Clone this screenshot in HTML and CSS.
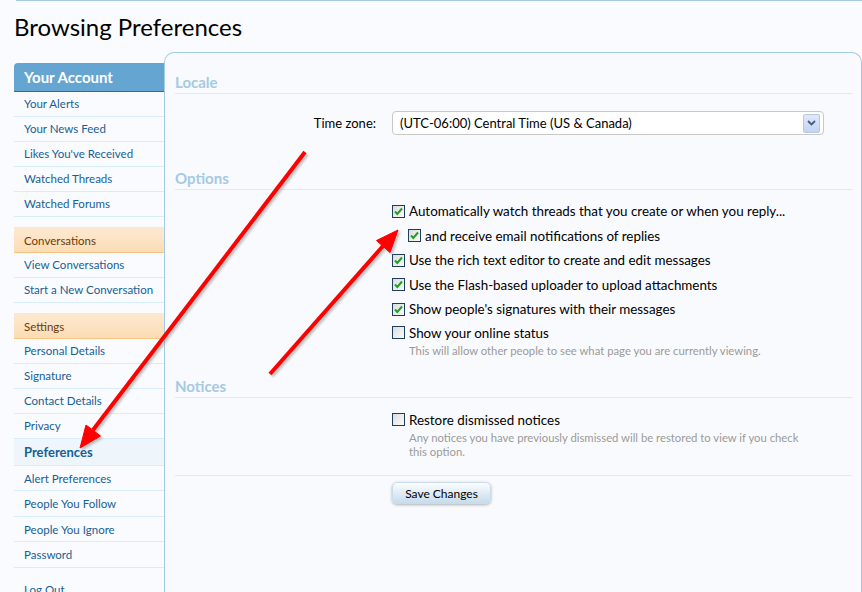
FILE: index.html
```html
<!DOCTYPE html>
<html lang="en">
<head>
    <meta charset="UTF-8">
    <title>Browsing Preferences</title>
    <link rel="stylesheet" href="styles.css">
</head>
<body>
    <div class="topline"></div>
    <h1 class="title">Browsing Preferences</h1>

    <div class="layout">
        <div class="sidebar">
            <div class="side-head">Your Account</div>
            <ul class="side-list">
                <li>Your Alerts</li>
                <li>Your News Feed</li>
                <li>Likes You've Received</li>
                <li>Watched Threads</li>
                <li>Watched Forums</li>
            </ul>
            <div class="side-group">Conversations</div>
            <ul class="side-list">
                <li>View Conversations</li>
                <li>Start a New Conversation</li>
            </ul>
            <div class="side-group">Settings</div>
            <ul class="side-list">
                <li>Personal Details</li>
                <li>Signature</li>
                <li>Contact Details</li>
                <li>Privacy</li>
                <li class="selected">Preferences</li>
                <li>Alert Preferences</li>
                <li>People You Follow</li>
                <li>People You Ignore</li>
                <li>Password</li>
            </ul>
            <ul class="side-list last">
                <li>Log Out</li>
            </ul>
        </div>

        <div class="panel">
            <h3 class="section-head first">Locale</h3>
            <div class="form-row">
                <label class="row-label">Time zone:</label>
                <div class="select">
                    <span>(UTC-06:00) Central Time (US &amp; Canada)</span>
                    <span class="select-btn">
                        <svg width="9" height="6" viewBox="0 0 9 6"><path d="M1 1 L4.5 4.5 L8 1" fill="none" stroke="#4a5d7a" stroke-width="1.8"/></svg>
                    </span>
                </div>
            </div>

            <h3 class="section-head options">Options</h3>
            <div class="options-list">
                <div class="opt"><span class="cb checked"></span>Automatically watch threads that you create or when you reply...</div>
                <div class="opt sub"><span class="cb checked"></span>and receive email notifications of replies</div>
                <div class="opt"><span class="cb checked"></span>Use the rich text editor to create and edit messages</div>
                <div class="opt"><span class="cb checked"></span>Use the Flash-based uploader to upload attachments</div>
                <div class="opt"><span class="cb checked"></span>Show people's signatures with their messages</div>
                <div class="opt short"><span class="cb"></span>Show your online status</div>
                <p class="hint">This will allow other people to see what page you are currently viewing.</p>
            </div>

            <h3 class="section-head notices">Notices</h3>
            <div class="options-list notices-list">
                <div class="opt short"><span class="cb"></span>Restore dismissed notices</div>
                <p class="hint">Any notices you have previously dismissed will be restored to view if you check this option.</p>
            </div>

            <div class="submit-row">
                <button class="save">Save Changes</button>
            </div>
        </div>
    </div>

    <svg class="arrows" width="862" height="592" viewBox="0 0 862 592">
        <defs>
            <filter id="blur"><feGaussianBlur stdDeviation="1"/></filter>
        </defs>
        <g fill="#9a9a9a" stroke="#9a9a9a" opacity="0.6" filter="url(#blur)" transform="translate(2,2)">
            <line x1="305" y1="152" x2="93" y2="430" stroke-width="4"/>
            <polygon points="80,448 100.5,436 86,425"/>
            <line x1="270" y1="374" x2="383" y2="246" stroke-width="4"/>
            <polygon points="398,230 390,252.5 376.5,240.5"/>
        </g>
        <g fill="#ff0000" stroke="#ff0000">
            <line x1="305" y1="152" x2="93" y2="430" stroke-width="4"/>
            <polygon points="80,448 100.5,436 86,425" stroke-width="1"/>
            <line x1="270" y1="374" x2="383" y2="246" stroke-width="4"/>
            <polygon points="398,230 390,252.5 376.5,240.5" stroke-width="1"/>
        </g>
    </svg>
</body>
</html>
```

FILE: styles.css
```css
body {
    margin: 0;
    background-color: #fafbfe;
    font-family: Lato, "Open Sans", sans-serif;
    color: #000;
    height: 592px;
    overflow: hidden;
    position: relative;
}
.topline {
    height: 1px;
    margin-left: 16px;
    background-color: #a5cae4;
}
.title {
    margin: 0;
    padding: 12px 0 0 14px;
    font-size: 24px;
    font-weight: normal;
    line-height: 28px;
    color: #000;
}
.layout {
    display: flex;
    margin-top: 11px;
    align-items: flex-start;
}
.sidebar {
    width: 150px;
    margin-left: 14px;
    margin-top: 11px;
    font-size: 11.5px;
}
.side-head {
    height: 28px;
    line-height: 28px;
    padding-left: 10px;
    background-color: #65a5d1;
    border-bottom: 1px solid #2f6c9f;
    border-radius: 4px 0 0 0;
    color: #fff;
    font-size: 15px;
    font-weight: bold;
}
.side-list {
    list-style: none;
    margin: 0;
    padding: 0;
}
.side-list li {
    height: 24px;
    line-height: 24px;
    padding-left: 10px;
    border-bottom: 1px solid #d7edfc;
    color: #176093;
}
.side-list li.selected {
    height: 26px;
    line-height: 27px;
    font-size: 13px;
    font-weight: bold;
    background-color: #eef5fb;
}
.side-list li.selected ~ li {
    height: 24.4px;
    line-height: 25px;
}
.side-group {
    margin-top: 10px;
    height: 24px;
    line-height: 25px;
    padding-left: 10px;
    border-top: 1px solid #fde7cc;
    border-bottom: 1px solid #f9c47f;
    background: linear-gradient(#fde9d0, #fcdcb5);
    color: #6b3b0a;
}
.side-list.last {
    margin-top: 10px;
}
.side-list.last li {
    border-bottom: none;
}
.panel {
    flex: 1;
    height: 560px;
    border: 1px solid #a5cae4;
    border-bottom: none;
    border-radius: 10px 10px 0 0;
    background-color: #f9fafd;
    padding: 0 9px 0 10px;
}
.section-head {
    margin: 0;
    height: 20px;
    line-height: 20px;
    padding-bottom: 1px;
    border-bottom: 1px solid #d7edfc;
    color: #a5cae4;
    font-size: 15px;
    font-weight: bold;
}
.section-head.first {
    margin-top: 19px;
}
.section-head.options {
    margin-top: 33px;
}
.section-head.notices {
    margin-top: 18px;
}
.form-row {
    display: flex;
    align-items: center;
    margin-top: 17px;
}
.row-label {
    width: 201px;
    text-align: right;
    padding-right: 16px;
    font-size: 13px;
}
.select {
    display: flex;
    align-items: center;
    justify-content: space-between;
    width: 420px;
    height: 22px;
    padding: 0 3px 0 7px;
    border: 1px solid #c8c8c8;
    border-radius: 4px;
    background-color: #fff;
    font-size: 13px;
}
.select-btn {
    display: flex;
    align-items: center;
    justify-content: center;
    width: 15px;
    height: 17px;
    border: 1px solid #b5c8e6;
    border-radius: 2px;
    background: linear-gradient(#e0e9fb, #c3d3f1);
}
.options-list {
    margin-left: 217px;
    margin-top: 9px;
    font-size: 13.4px;
}
.opt {
    display: flex;
    align-items: center;
    height: 24.5px;
}
.opt.sub {
    padding-left: 16px;
}
.opt.short {
    height: 22px;
}
.cb {
    display: inline-block;
    box-sizing: border-box;
    width: 13px;
    height: 13px;
    margin-right: 4px;
    border: 1px solid #1c3f5e;
    background: linear-gradient(135deg, #dcdcdc, #fbfbfb);
    flex-shrink: 0;
}
.cb.checked {
    background: url("data:image/svg+xml;utf8,<svg xmlns='http://www.w3.org/2000/svg' width='11' height='11'><path d='M2 5.5 L4.3 8 L9 2.5' fill='none' stroke='%2321a121' stroke-width='2'/></svg>") no-repeat center, linear-gradient(135deg, #dcdcdc, #fbfbfb);
}
.hint {
    margin: 0;
    padding-left: 17px;
    font-size: 11.3px;
    line-height: 14px;
    color: #9a9a9a;
    max-width: 400px;
}
.notices-list {
    margin-top: 11px;
}
.submit-row {
    margin-top: 16px;
    border-top: 1px solid #d7edfc;
    padding: 6px 0 0 217px;
}
.save {
    width: 99px;
    height: 22px;
    padding: 0;
    border: 1px solid #c9dcea;
    border-radius: 5px;
    background: linear-gradient(#fbfcfe, #c6dcec);
    box-shadow: 0 1px 3px rgba(0, 0, 0, 0.3);
    font-family: Lato, "Open Sans", sans-serif;
    font-size: 12px;
    color: #000;
}
.arrows {
    position: absolute;
    left: 0;
    top: 0;
    pointer-events: none;
}
```
